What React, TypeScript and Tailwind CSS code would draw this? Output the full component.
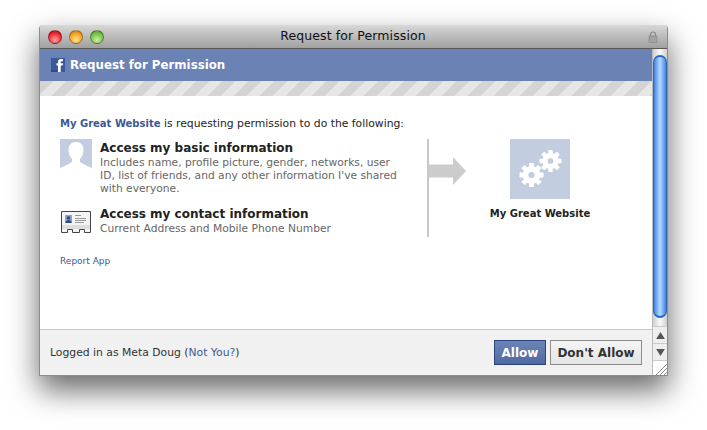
import React from 'react'

const font = { fontFamily: '"DejaVu Sans", sans-serif' }

function Light({ className }: { className: string }) {
  return <div className={`w-[14px] h-[14px] rounded-full border border-black/30 ${className}`} />
}

function Gears() {
  const gear = (cx: number, cy: number, r: number) => {
    const teeth = [0, 45, 90, 135, 180, 225, 270, 315]
    return (
      <g fill="#fff">
        {teeth.map(a => (
          <rect key={a} x={cx - r * 0.2} y={cy - r} width={r * 0.4} height={r * 0.45} rx="0.6" transform={`rotate(${a} ${cx} ${cy})`} />
        ))}
        <path fillRule="evenodd" d={`M${cx - r * 0.74} ${cy}a${r * 0.74} ${r * 0.74} 0 1 0 ${r * 1.48} 0a${r * 0.74} ${r * 0.74} 0 1 0 ${-r * 1.48} 0zM${cx - r * 0.26} ${cy}a${r * 0.26} ${r * 0.26} 0 1 1 ${r * 0.52} 0a${r * 0.26} ${r * 0.26} 0 1 1 ${-r * 0.52} 0z`} />
      </g>
    )
  }
  return (
    <div className="w-[60px] h-[60px] bg-[#c3cde0]">
      <svg width="60" height="60" viewBox="0 0 60 60">
        {gear(21.5, 36, 12)}
        {gear(40.5, 22, 11)}
      </svg>
    </div>
  )
}

function Silhouette() {
  return (
    <svg width="32" height="32" viewBox="0 0 32 32" className="shrink-0">
      <rect width="32" height="32" fill="#c3cde0" />
      <path fill="#fff" d="M16 3c-5 0-7.500 3.500-7.500 8 0 3.500 1.500 7 3.500 9v2.500c-1.500 2-6 4-12 6.500v3h32v-3c-6-2.500-10.500-4.500-12-6.500V20c2-2 3.500-5.500 3.500-9 0-4.500-2.500-8-7.500-8z" />
    </svg>
  )
}

function ContactCard() {
  return (
    <svg width="32" height="24" viewBox="0 0 32 24" className="shrink-0">
      <path fill="#f4f4f4" stroke="#444" d="M1.500 1.500h29v21h-6v-3h-5v3h-7v-3h-5v3h-6z" />
      <rect x="2" y="15" width="28" height="4" fill="#ddd" />
      <rect x="5" y="5" width="7" height="8" fill="#8fa3c8" />
      <circle cx="8.500" cy="8" r="1.800" fill="#2f4a86" />
      <path fill="#2f4a86" d="M5.500 13c0-2 1.500-3 3-3s3 1 3 3z" />
      <path stroke="#999" strokeWidth="1" d="M15 5.500h6M15 8.500h11M15 10.500h11M15 12.500h9" />
    </svg>
  )
}

function FbLogo() {
  return (
    <svg width="14" height="14" viewBox="0 0 14 14" className="shrink-0">
      <rect width="14" height="14" fill="#3b5998" />
      <rect y="12" width="6" height="2" fill="#2f4a86" />
      <path fill="#fff" d="M7 14V7.500H5.500V5.300H7V3.800C7 2 8 1 9.800 1H12v2.200h-1.300c-.8 0-1 .4-1 1v1.100H12l-.3 2.200h-2V14z" />
    </svg>
  )
}

export default function App() {
  return (
    <div className="w-[707px] h-[430px] bg-white overflow-hidden pt-[25px] pl-[39px]" style={font}>
      <div className="w-[629px] h-[351px] flex flex-col border-x border-b border-[#8c8c8c] rounded-t-[4px] shadow-[0_14px_30px_rgba(0,0,0,0.6)]">
        {/* title bar */}
        <div className="h-[24px] shrink-0 flex items-center px-[8px] rounded-t-[4px] border-b border-[#5a5a5a] bg-gradient-to-b from-[#d8d8d8] to-[#a0a0a0]">
          <div className="flex-1 flex gap-[7px]">
            <Light className="bg-[radial-gradient(circle_at_50%_75%,#ffa0a0,#e8222c_65%,#b01018)]" />
            <Light className="bg-[radial-gradient(circle_at_50%_75%,#ffe490,#f09c1e_65%,#bc7410)]" />
            <Light className="bg-[radial-gradient(circle_at_50%_75%,#ccf0a4,#70bc40_65%,#4e8e28)]" />
          </div>
          <div className="text-[12.500px] text-[#111] tracking-[0.1px] -ml-[1px]">Request for Permission</div>
          <div className="flex-1 flex justify-end">
            <svg width="10" height="12" viewBox="0 0 10 12" className="mr-[1px]">
              <path fill="none" stroke="#8a8a8a" strokeWidth="1.200" d="M2.500 5V3.500a2.500 2.500 0 0 1 5 0V5" />
              <rect x="1" y="5" width="8" height="6.500" fill="#a2a2a2" stroke="#858585" strokeWidth="0.600" />
            </svg>
          </div>
        </div>

        <div className="flex-1 flex min-h-0">
          <div className="flex-1 flex flex-col min-w-0">
            {/* blue header */}
            <div className="h-[32px] shrink-0 bg-[#6b82b4] flex items-center pl-[11px] gap-[5px]">
              <FbLogo />
              <span className="text-white font-bold text-[11.800px] mt-[2px]">Request for Permission</span>
            </div>
            {/* stripes */}
            <div className="h-[15px] shrink-0 bg-[repeating-linear-gradient(135deg,#d4d4d4_0px,#d4d4d4_9.200px,#e6e6e6_9.200px,#e6e6e6_18.400px)]" />

            {/* content */}
            <div className="flex-1 bg-white pl-[20px] pt-[21px]">
              <div className="text-[10.800px] leading-[13px] text-[#222]">
                <span className="text-[#3b5998] font-bold text-[10px]">My Great Website</span> is requesting permission to do the following:
              </div>
              <div className="flex mt-[9px]">
                <div className="w-[367px] shrink-0 flex flex-col gap-[11px] h-[98px]">
                  <div className="flex gap-[8px]">
                    <Silhouette />
                    <div className="w-[300px] mt-[1px]">
                      <div className="text-[12px] leading-[16px] font-bold text-[#222]">Access my basic information</div>
                      <div className="text-[10.700px] leading-[13px] text-[#666]">Includes name, profile picture, gender, networks, user ID, list of friends, and any other information I've shared with everyone.</div>
                    </div>
                  </div>
                  <div className="flex gap-[8px]">
                    <div className="mt-[4px]"><ContactCard /></div>
                    <div>
                      <div className="text-[12px] leading-[16px] font-bold text-[#222]">Access my contact information</div>
                      <div className="text-[10.700px] leading-[14px] text-[#666]">Current Address and Mobile Phone Number</div>
                    </div>
                  </div>
                </div>
                <div className="w-[2px] h-[98px] bg-[#c8c8c8] shrink-0" />
                <svg width="37" height="28" viewBox="0 0 37 28" className="shrink-0 mt-[18px]">
                  <path fill="#cccccc" d="M0 7.500h24V0l13 14-13 14v-7.500H0z" />
                </svg>
                <div className="flex flex-col items-center w-[124px] ml-[12px]">
                  <Gears />
                  <div className="mt-[8px] text-[10px] leading-[13px] font-bold text-[#222] whitespace-nowrap">My Great Website</div>
                </div>
              </div>
              <div className="mt-[19px] text-[9px] leading-[11px] text-[#3b5998]">Report App</div>
            </div>

            {/* footer */}
            <div className="h-[46px] shrink-0 bg-[#f1f1f1] border-t border-[#c6c6c6] flex items-center justify-between pl-[10px] pr-[10px]">
              <div className="text-[10.800px] text-[#333] mt-[2px]">
                Logged in as Meta Doug (<span className="text-[#3b5998]">Not You?</span>)
              </div>
              <div className="flex gap-[4px]">
                <button className="w-[52px] h-[25px] border border-[#29447e] bg-gradient-to-b from-[#6d84b4] to-[#4f6aa3] text-white font-bold text-[12px]">Allow</button>
                <button className="w-[92px] h-[25px] border border-[#8c8c8c] bg-gradient-to-b from-[#f5f5f5] to-[#e4e4e4] text-[#333] font-bold text-[12px]">Don't Allow</button>
              </div>
            </div>
          </div>

          {/* scrollbar */}
          <div className="w-[15px] shrink-0 flex flex-col bg-[#eeeeee] border-l border-[#bbb]">
            <div className="flex-1 bg-gradient-to-r from-[#cfcfcf] via-[#fafafa] to-[#cfcfcf] pt-[6px] pb-[8px]">
              <div className="h-full rounded-full border-x border-[#2f66b8] border-t-2 border-t-[#2468c8] border-b-2 border-b-[#2468c8] bg-gradient-to-r from-[#3f82e4] via-[#b8dafc] to-[#3f82e4]" />
            </div>
            <div className="h-[17px] shrink-0 border-t border-[#ccc] flex items-center justify-center">
              <svg width="9" height="7" viewBox="0 0 10 8"><path fill="#555" d="M5 0l5 8H0z" /></svg>
            </div>
            <div className="h-[17px] shrink-0 border-t border-[#ccc] flex items-center justify-center">
              <svg width="9" height="7" viewBox="0 0 10 8"><path fill="#555" d="M5 8L0 0h10z" /></svg>
            </div>
            <div className="h-[15px] shrink-0 border-t border-[#ccc] bg-white flex items-end justify-end">
              <svg width="12" height="12" viewBox="0 0 12 12">
                <path stroke="#888" strokeWidth="1" d="M1 12L12 1M5 12l7-7M9 12l3-3" />
              </svg>
            </div>
          </div>
        </div>
      </div>
    </div>
  )
}
